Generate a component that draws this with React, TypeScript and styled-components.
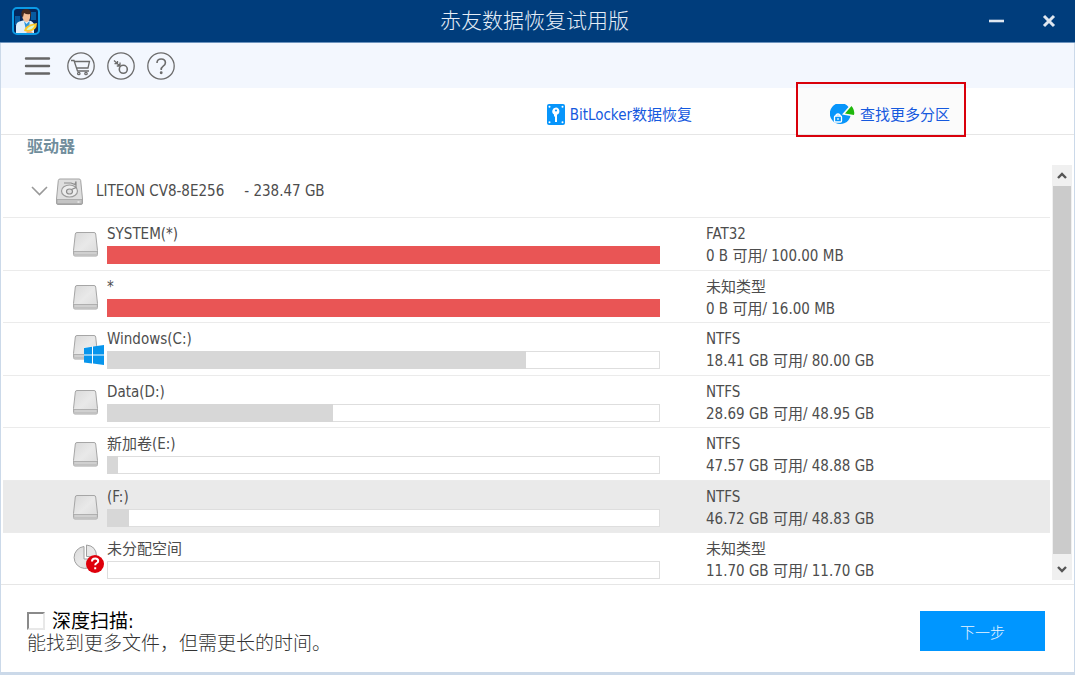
import React from "react";
import styled, { createGlobalStyle } from "styled-components";

const GlobalStyle = createGlobalStyle`
  *, *::before, *::after { box-sizing: border-box; }
  body {
    margin: 0;
    background: #ffffff;
    color: #4d4d4d;
    font-family: "DejaVu Sans Condensed", "Noto Sans CJK SC", sans-serif;
    font-size: 15px;
  }
  button { font-family: inherit; padding: 0; border: 0; background: none; cursor: pointer; }
  svg { display: block; flex: none; }
`;

const Window = styled.div`
  display: flex;
  flex-direction: column;
  height: 100vh;
  min-height: 600px;
  border: solid #cbd9e9;
  border-width: 0 1px 3px 1px;
`;

const TitleBar = styled.header`
  display: grid;
  grid-template-columns: 1fr auto 1fr;
  align-items: center;
  height: 43px;
  flex: none;
  margin: 0 -1px;
  padding: 0 18px 0 12px;
  background: #003d7c;
  border-bottom: 1px solid #6d94be;
  color: #e6eef7;
`;

const Title = styled.h1`
  margin: 0;
  font-size: 21px;
  line-height: 28px;
  font-weight: 300;
`;

const WindowControls = styled.div`
  display: flex;
  justify-content: flex-end;
  gap: 36px;
  button { width: 16px; height: 20px; display: grid; place-items: center; }
`;

const Toolbar = styled.nav`
  display: flex;
  align-items: center;
  gap: 12px;
  height: 45px;
  flex: none;
  padding: 0 24px 0 23px;
  background: #f3f7fe;
`;

const ToolButton = styled.button<{ $spaced?: boolean }>`
  margin-right: ${(p) => (p.$spaced ? "4px" : "0")};
`;

const LinkBar = styled.div`
  display: flex;
  justify-content: flex-end;
  gap: 104px;
  height: 47px;
  flex: none;
  padding-right: 108px;
  border-bottom: 1px solid #e6e6e6;
`;

const ActionLink = styled.a<{ $marked?: boolean }>`
  display: flex;
  align-items: center;
  gap: 5px;
  padding: ${(p) => (p.$marked ? "7px 16px 0 34px" : "7px 0 0")};
  position: relative;
  color: #1559de;
  background: ${(p) => (p.$marked ? "#fbfbfb" : "none")};
  text-decoration: none;
  line-height: 22px;
`;

const MarkFrame = styled.span`
  position: absolute;
  inset: -6px 0 -3px;
  border: 2px solid #d9000b;
`;

const DrivePane = styled.main`
  display: flex;
  flex-direction: column;
  flex: 1;
  min-height: 0;
  padding: 0 2px;
`;

const PaneHeading = styled.h2`
  margin: 0;
  padding-left: 24px;
  height: 30px;
  line-height: 24px;
  font-size: 16px;
  font-weight: 700;
  color: #718e9c;
`;

const ListFrame = styled.div`
  display: flex;
  flex: 1;
  min-height: 0;
  gap: 2px;
`;

const DriveList = styled.div`
  flex: 1;
  overflow: hidden;
`;

const DiskRow = styled.div`
  display: flex;
  align-items: center;
  height: 53px;
  padding-left: 28px;
  border-bottom: 1px solid #ebebeb;
  white-space: pre;
`;

const DiskName = styled.span`
  margin-left: 13px;
`;

const DiskSize = styled.span`
  margin-left: 20px;
`;

const Chevron = styled.svg`
  margin-right: 8px;
`;

const Partitions = styled.ul`
  display: grid;
  grid-template-rows: repeat(7, 1fr);
  height: 368px;
  margin: 0;
  padding: 0;
  list-style: none;
`;

const PartitionRow = styled.li<{ $selected?: boolean }>`
  display: grid;
  grid-template-columns: 34px minmax(200px, 1fr) 344px;
  padding-left: 70px;
  border-bottom: 1px solid #ebebeb;
  background: ${(p) => (p.$selected ? "#eaeaea" : "none")};
`;

const IconCell = styled.div`
  padding-top: 11px;
`;

const NameCell = styled.div`
  padding-top: 5px;
  margin-right: 46px;
  line-height: 22px;
`;

const InfoCell = styled.div`
  padding-top: 5px;
  line-height: 22px;
`;

const UsageBar = styled.div`
  height: 18px;
  margin-top: 1px;
  border: 1px solid #dedede;
  background: #ffffff;
`;

const UsageFill = styled.div<{ $full?: boolean }>`
  height: 18px;
  margin: -1px;
  background: ${(p) => (p.$full ? "#e95555" : "#d7d7d7")};
`;

const ScrollBar = styled.div`
  display: flex;
  flex-direction: column;
  width: 20px;
  margin-bottom: 4px;
  background: #f0f0f0;
  button { height: 21px; display: grid; place-items: center; }
  button:last-child { height: 26px; padding-top: 4px; }
`;

const ScrollThumb = styled.div`
  flex: 1;
  margin: 0 1px;
  background: #cbcbcb;
`;

const Footer = styled.footer`
  display: flex;
  justify-content: space-between;
  align-items: flex-start;
  height: 88px;
  flex: none;
  padding: 26px 29px 0 26px;
  border-top: 1px solid #e6e6e6;
`;

const ScanLabel = styled.label`
  display: flex;
  align-items: center;
  gap: 7px;
  font-size: 19px;
  line-height: 20px;
  color: #000000;
`;

const CheckBox = styled.input`
  appearance: none;
  width: 18px;
  height: 18px;
  margin: 0;
  background: #ffffff;
  border: 2px solid;
  border-color: #8a8a8a #e8e8e8 #e8e8e8 #8a8a8a;
`;

const ScanHint = styled.p`
  margin: 0;
  font-size: 19px;
  font-weight: 300;
  line-height: 24px;
  color: #333333;
`;

const NextButton = styled.button`
  && {
    width: 125px;
    height: 40px;
    background: #0096ff;
    color: #e8f5ff;
    font-size: 15px;
    font-weight: 300;
  }
`;

const AppLogo = () => (
  <svg width="28" height="28" viewBox="0 0 28 28" aria-hidden="true">
    <rect x="1" y="1" width="26" height="26" rx="4" fill="#04275c" stroke="#0b9be6" strokeWidth="2" />
    <path d="M19 5h5v8h-5zM3 9h5v9H3z" fill="#075aa0" />
    <path d="M4 26V19q0-4 5-5l4-1 6 1q4 2 3 6v6z" fill="#e2effa" />
    <path d="M12 14l2.500 3 3-3v7h-4z" fill="#2f95da" />
    <path d="M10.500 6h7.500v5q-1 4-3.500 4t-4-4z" fill="#f2bd98" />
    <path d="M9.500 9Q8.500 2 14 2q6 0 5 7l-1 1V7q-3 1-6-1l-1 4z" fill="#45291f" />
    <path d="M12 24q0-6 13-8 0 8-9 9z" fill="#ffc928" />
    <path d="M14.500 23q1-3.500 8-5-1 5-8 5z" fill="#d8f7ce" />
    <path d="M14 25l5-1 2 2h-6z" fill="#e9a77f" />
  </svg>
);

const MenuIcon = () => (
  <svg width="27" height="28" viewBox="0 0 27 28" aria-hidden="true">
    <path d="M2 6.500h23M2 14h23M2 21.500h23" stroke="#666" strokeWidth="2.400" strokeLinecap="round" />
  </svg>
);

const CircleIcon = ({ kind }: { kind: "cart" | "key" | "help" }) => (
  <svg width="28" height="28" viewBox="0 0 28 28" fill="none" stroke="#6c6c6c" strokeWidth="1.300" aria-hidden="true">
    <circle cx="14" cy="14" r="13.200" />
    {kind === "cart" && (
      <>
        <path d="M4 8.500h3l3.500 10.500h11.500M7.800 9.500h14.700l-1.500 6.500H10" />
        <circle cx="11.800" cy="21.500" r="1.200" />
        <circle cx="19" cy="21.500" r="1.200" />
      </>
    )}
    {kind === "key" && (
      <>
        <circle cx="16.300" cy="17.300" r="4" strokeWidth="1.600" />
        <path d="M7 8.500l6.500 6M10.500 12.500V9M10.500 11.700H7.500M13 14v-3.500M13 14H9.800" strokeWidth="1.300" />
      </>
    )}
    {kind === "help" && (
      <>
        <path d="M10 11q0-4 4.200-4t4.200 3.700q0 2-2.200 3.500T14.200 18" strokeWidth="1.600" />
        <circle cx="14.200" cy="20.800" r=".8" fill="#6c6c6c" />
      </>
    )}
  </svg>
);

const BitLockerIcon = () => (
  <svg width="18" height="21" viewBox="0 0 18 21" aria-hidden="true">
    <rect width="18" height="21" rx="2" fill="#0795fb" />
    <path d="M9 3.500a3.800 3.800 0 0 0-2 7V12l1 1v5h2V10.800A3.800 3.800 0 0 0 9 3.500z" fill="#fff" />
    <circle cx="9" cy="6.500" r="1.100" fill="#0795fb" />
    <g fill="#fff">
      <circle cx="2.500" cy="2.800" r="1" />
      <circle cx="15.500" cy="2.800" r="1" />
      <circle cx="2.500" cy="18.200" r="1" />
      <circle cx="15.500" cy="18.200" r="1" />
    </g>
  </svg>
);

const PieSearchIcon = () => (
  <svg width="25" height="21" viewBox="0 0 25 21" aria-hidden="true">
    <path d="M12 10.500L18.500 3A10.500 10.500 0 1 0 20.500 12z" fill="#0795fb" />
    <path d="M15 9.500L21.500 2Q25 6 24 11z" fill="#1fb80c" />
    <rect x="4.500" y="12" width="7" height="6" rx="1" fill="none" stroke="#fff" strokeWidth="1.300" />
    <path d="M6 12v-1q2-2 4 0v1M8 14v2" fill="none" stroke="#fff" strokeWidth="1.200" />
  </svg>
);

const DiskIcon = () => (
  <svg width="27" height="27" viewBox="0 0 27 27" aria-hidden="true">
    <path d="M4 1h19q1.500 0 1.700 1.500L26.500 21v4q0 1.500-1.500 1.500H2Q.5 26.500.5 25v-4L2.300 2.500Q2.500 1 4 1z" fill="#dedede" stroke="#a3a3a3" />
    <path d="M1 21.500h25v4H1z" fill="#c4c4c4" stroke="#a3a3a3" strokeWidth=".8" />
    <ellipse cx="13.500" cy="13" rx="8" ry="6" fill="#ededed" stroke="#9c9c9c" strokeWidth="1.200" />
    <ellipse cx="13.500" cy="13.500" rx="3" ry="2.500" fill="#ddd" stroke="#8c8c8c" strokeWidth="1.200" />
    <path d="M8 5h7l4 1.500 1-3v6l-4.500 2" fill="none" stroke="#8c8c8c" strokeWidth="1.200" />
    <path d="M21.500 24h2" stroke="#fff" />
  </svg>
);

type IconKind = "plain" | "windows" | "unknown";

const VolumeIcon = ({ kind }: { kind: IconKind }) => (
  <svg width="32" height="34" viewBox="0 0 32 34" aria-hidden="true">
    <defs>
      <linearGradient id={`face-${kind}`} x1="0" y1="0" x2="1" y2="1">
        <stop offset="0" stopColor="#d9d9d9" />
        <stop offset=".5" stopColor="#e9e9e9" />
        <stop offset="1" stopColor="#dadada" />
      </linearGradient>
    </defs>
    {kind === "unknown" ? (
      <>
        <path d="M11 2.500A11 11 0 1 0 23 15H11z" fill={`url(#face-${kind})`} stroke="#a0a0a0" />
        <path d="M13.500 1v11.500h10Q23.500 2 13.500 1z" fill="#e8e8e8" stroke="#a0a0a0" />
        <circle cx="22" cy="20" r="9" fill="#df000b" />
        <path d="M19 17.500q0-3 3.200-3 3 0 3 2.500 0 1.500-1.600 2.200-1.400.7-1.400 2M22.200 23.200v2" fill="none" stroke="#fff" strokeWidth="2" />
      </>
    ) : (
      <>
        <g transform={kind === "plain" ? "translate(0 3)" : "translate(0 1)"}>
          <path d="M4 .5h17q1.500 0 1.700 1.500L24.500 18.500v4q0 1.500-1.500 1.500H2Q.5 24 .5 22.500v-4L2.300 2Q2.500.5 4 .5z" fill={`url(#face-${kind})`} stroke="#a6a6a6" />
          <path d="M.8 19.500h23.400v3.200q0 1-1 1H1.800q-1 0-1-1z" fill="#c2c2c2" />
          <path d="M1 19.500h23" stroke="#a6a6a6" strokeWidth=".8" />
          <path d="M1.500 21h22" stroke="#dedede" />
        </g>
        {kind === "windows" && (
          <>
            <path d="M11 13.500L31 11v20l-20-2.500z" fill="#fff" />
            <path d="M11 14l8-1.200v7.700h-8zM20 12.600l11-1.600v9.500H20zM11 21.500h8v8L11 28.500zM20 21.500h11V31l-11-1.400z" fill="#0795ec" />
          </>
        )}
      </>
    )}
  </svg>
);

const Arrow = ({ up }: { up?: boolean }) => (
  <svg width="12" height="10" viewBox="0 0 12 10" aria-hidden="true">
    <path d={up ? "M2 7l4-4 4 4" : "M2 3l4 4 4-4"} fill="none" stroke="#555" strokeWidth="2.400" />
  </svg>
);

const partitions: { name: string; type: string; space: string; used: number; icon: IconKind; selected?: boolean }[] = [
  { name: "SYSTEM(*)", type: "FAT32", space: "0 B 可用/ 100.00 MB", used: 100, icon: "plain" },
  { name: "*", type: "未知类型", space: "0 B 可用/ 16.00 MB", used: 100, icon: "plain" },
  { name: "Windows(C:)", type: "NTFS", space: "18.41 GB 可用/ 80.00 GB", used: 76, icon: "windows" },
  { name: "Data(D:)", type: "NTFS", space: "28.69 GB 可用/ 48.95 GB", used: 41, icon: "plain" },
  { name: "新加卷(E:)", type: "NTFS", space: "47.57 GB 可用/ 48.88 GB", used: 2, icon: "plain" },
  { name: "(F:)", type: "NTFS", space: "46.72 GB 可用/ 48.83 GB", used: 4, icon: "plain", selected: true },
  { name: "未分配空间", type: "未知类型", space: "11.70 GB 可用/ 11.70 GB", used: 0, icon: "unknown" },
];

export default function App() {
  return (
    <Window>
      <GlobalStyle />
      <TitleBar>
        <AppLogo />
        <Title>赤友数据恢复试用版</Title>
        <WindowControls>
          <button aria-label="最小化">
            <svg width="16" height="16" viewBox="0 0 16 16"><path d="M0 8h15" stroke="#dfe7f0" strokeWidth="2.600" /></svg>
          </button>
          <button aria-label="关闭">
            <svg width="16" height="16" viewBox="0 0 16 16"><path d="M3 3l10 10M13 3L3 13" stroke="#dfe7f0" strokeWidth="3" /></svg>
          </button>
        </WindowControls>
      </TitleBar>
      <Toolbar>
        <ToolButton $spaced aria-label="菜单"><MenuIcon /></ToolButton>
        <ToolButton aria-label="购买"><CircleIcon kind="cart" /></ToolButton>
        <ToolButton aria-label="注册"><CircleIcon kind="key" /></ToolButton>
        <ToolButton aria-label="帮助"><CircleIcon kind="help" /></ToolButton>
      </Toolbar>
      <LinkBar>
        <ActionLink href="#bitlocker">
          <BitLockerIcon />
          <span>BitLocker数据恢复</span>
        </ActionLink>
        <ActionLink href="#partitions" $marked>
          <PieSearchIcon />
          <span>查找更多分区</span>
          <MarkFrame />
        </ActionLink>
      </LinkBar>
      <DrivePane>
        <PaneHeading>驱动器</PaneHeading>
        <ListFrame>
          <DriveList>
            <DiskRow>
              <Chevron width="17" height="10" viewBox="0 0 17 10" aria-hidden="true">
                <path d="M1 1l7.500 7.500L16 1" fill="none" stroke="#999" strokeWidth="1.600" />
              </Chevron>
              <DiskIcon />
              <DiskName>LITEON CV8-8E256</DiskName>
              <DiskSize>- 238.47 GB</DiskSize>
            </DiskRow>
            <Partitions>
              {partitions.map((p) => (
                <PartitionRow key={p.name} $selected={p.selected}>
                  <IconCell><VolumeIcon kind={p.icon} /></IconCell>
                  <NameCell>
                    {p.name}
                    <UsageBar role="meter" aria-label={p.name} aria-valuemin={0} aria-valuemax={100} aria-valuenow={p.used}>
                      {p.used > 0 && <UsageFill $full={p.used === 100} style={{ width: p.used === 100 ? "calc(100% + 2px)" : `${p.used}%` }} />}
                    </UsageBar>
                  </NameCell>
                  <InfoCell>
                    <div>{p.type}</div>
                    <div>{p.space}</div>
                  </InfoCell>
                </PartitionRow>
              ))}
            </Partitions>
          </DriveList>
          <ScrollBar>
            <button aria-label="向上滚动"><Arrow up /></button>
            <ScrollThumb />
            <button aria-label="向下滚动"><Arrow /></button>
          </ScrollBar>
        </ListFrame>
      </DrivePane>
      <Footer>
        <div>
          <ScanLabel>
            <CheckBox type="checkbox" />
            深度扫描:
          </ScanLabel>
          <ScanHint>能找到更多文件，但需更长的时间。</ScanHint>
        </div>
        <NextButton>下一步</NextButton>
      </Footer>
    </Window>
  );
}
